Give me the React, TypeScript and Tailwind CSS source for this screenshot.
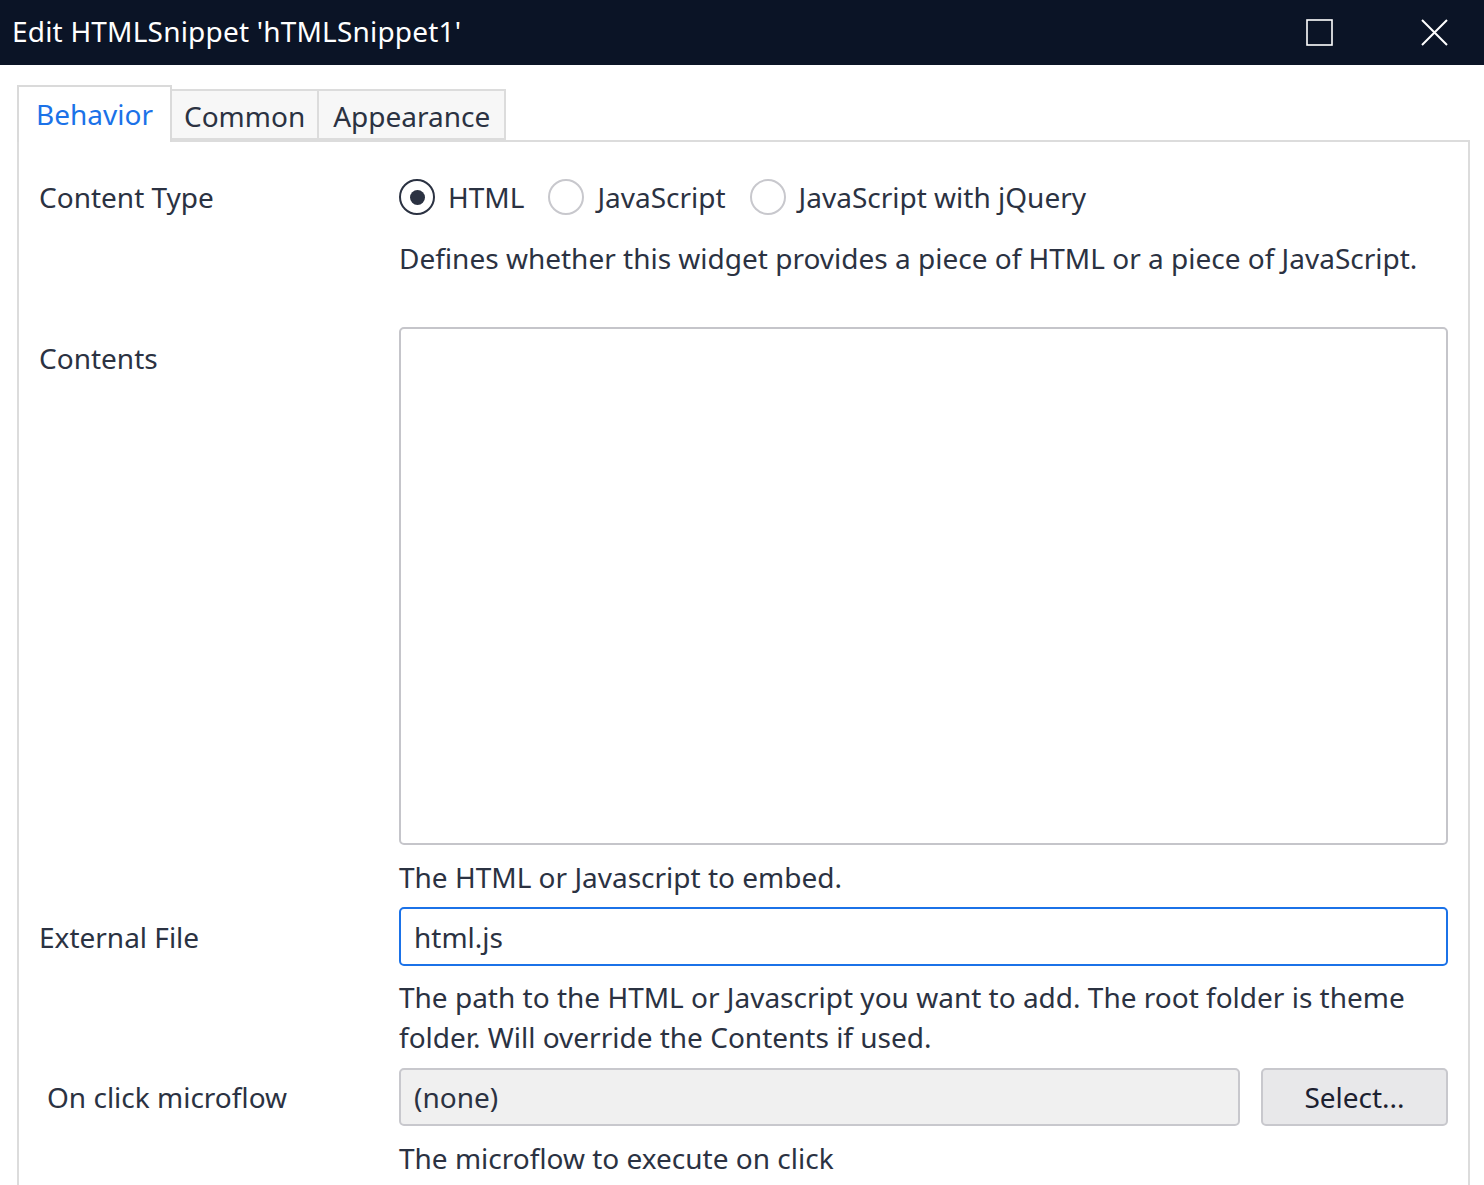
import React from 'react';

const font = { fontFamily: '"Noto Sans", "Open Sans", sans-serif' };

const Radio: React.FC<{ label: string; checked?: boolean }> = ({ label, checked }) => (
  <label className="flex items-center gap-[13px] mr-[24px]">
    <span
      className={`w-[36px] h-[36px] rounded-full border-2 flex items-center justify-center ${
        checked ? 'border-[#2b3242]' : 'border-[#c8c8cd]'
      }`}
    >
      {checked && <span className="w-[15px] h-[15px] rounded-full bg-[#2b3242]" />}
    </span>
    <span>{label}</span>
  </label>
);

const App: React.FC = () => {
  return (
    <div className="w-[1484px] h-[1185px] bg-white overflow-hidden text-[28px] text-[#2b3242] leading-[40px]" style={font}>
      {/* title bar */}
      <div className="h-[65px] bg-[#0b1426] flex items-center pl-[12px] text-white">
        <span className="flex-1 -mt-[3px] tracking-[0.2px]">Edit HTMLSnippet 'hTMLSnippet1'</span>
        <svg className="w-[27px] h-[27px] mr-[88px]" viewBox="0 0 27 27" fill="none" stroke="#ffffff" strokeWidth={1.6}>
          <rect x="1" y="1" width="25" height="25" />
        </svg>
        <svg className="w-[27px] h-[27px] mr-[36px]" viewBox="0 0 27 27" fill="none" stroke="#ffffff" strokeWidth={2}>
          <path d="M1 1L26 26M26 1L1 26" />
        </svg>
      </div>

      <div className="px-[14px] pl-[17px]">
        {/* tabs */}
        <div className="flex items-end h-[75px] pt-[18px]">
          <div className="h-[57px] px-[17px] border-2 border-b-0 border-[#dadada] bg-white text-[#1b72e8] flex items-center relative z-10 -mb-[2px] pb-[2px]">
            Behavior
          </div>
          <div className="h-[51px] px-[12px] border-2 border-l-0 border-[#dcdcdc] bg-[#f7f7f7] flex items-center pt-[2px]">
            Common
          </div>
          <div className="h-[51px] px-[14px] border-2 border-l-0 border-[#dcdcdc] bg-[#f7f7f7] flex items-center pt-[2px]">
            Appearance
          </div>
        </div>

        {/* panel */}
        <div className="border-2 border-b-0 border-[#dcdcdc] h-[1200px] pl-[20px] pr-[20px] pt-[35px]">
          {/* content type */}
          <div className="flex">
            <div className="w-[360px] shrink-0">Content Type</div>
            <div className="flex-1">
              <div className="flex">
                <Radio label="HTML" checked />
                <Radio label="JavaScript" />
                <Radio label="JavaScript with jQuery" />
              </div>
              <div className="mt-[21px]">Defines whether this widget provides a piece of HTML or a piece of JavaScript.</div>
            </div>
          </div>

          {/* contents */}
          <div className="flex mt-[49px]">
            <div className="w-[360px] shrink-0 pt-[11px]">Contents</div>
            <div className="flex-1">
              <textarea className="block w-full h-[518px] border-2 border-[#c5c5ca] rounded-[5px] resize-none outline-none" />
              <div className="mt-[12px]">The HTML or Javascript to embed.</div>
            </div>
          </div>

          {/* external file */}
          <div className="flex mt-[10px]">
            <div className="w-[360px] shrink-0 h-[59px] flex items-center">External File</div>
            <div className="flex-1">
              <div className="h-[59px] border-2 border-[#1b72e8] rounded-[5px] flex items-center px-[13px]">html.js</div>
              <div className="mt-[11px]">
                The path to the HTML or Javascript you want to add. The root folder is theme folder. Will override the Contents if used.
              </div>
            </div>
          </div>

          {/* on click microflow */}
          <div className="flex mt-[11px]">
            <div className="w-[360px] shrink-0 h-[58px] flex items-center pl-[8px]">On click microflow</div>
            <div className="flex-1">
              <div className="flex gap-[21px]">
                <div className="flex-1 h-[58px] border-2 border-[#c8c8cd] bg-[#f0f0f0] rounded-[5px] flex items-center px-[13px]">(none)</div>
                <button className="w-[187px] h-[58px] border-2 border-[#c8c8cd] bg-[#e8e8ea] rounded-[5px] text-[#1c2130]">Select...</button>
              </div>
              <div className="mt-[12px]">The microflow to execute on click</div>
            </div>
          </div>
        </div>
      </div>
    </div>
  );
};

export default App;
